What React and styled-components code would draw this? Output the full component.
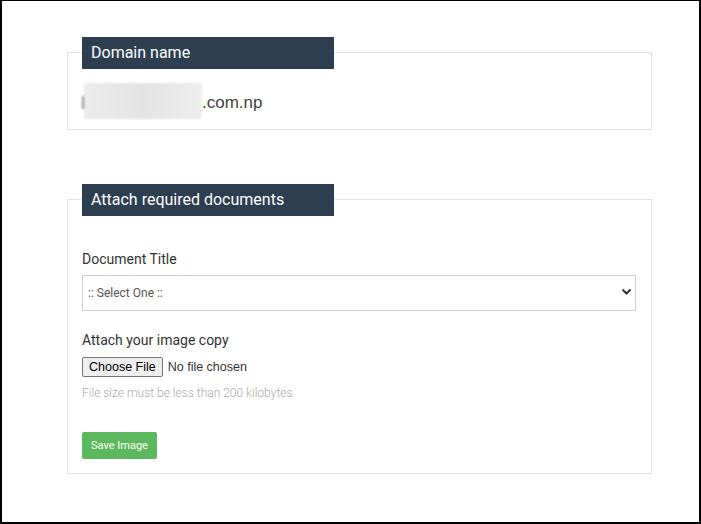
import React from "react";
import styled, { createGlobalStyle } from "styled-components";

const GlobalStyle = createGlobalStyle`
  * {
    box-sizing: border-box;
  }
  body {
    margin: 0;
    background: #fff;
    font-family: Roboto, "Liberation Sans", Arial, sans-serif;
  }
`;

const Frame = styled.div`
  width: 701px;
  height: 524px;
  border-style: solid;
  border-color: #000;
  border-width: 1px 2px 2px 2px;
  padding: 51px 0 0 65px;
  overflow: hidden;
`;

const Card = styled.section`
  width: 585px;
  border: 1px solid #e3e3e3;
  padding: 0 14px ${(p) => p.$bottom || 0}px;
  margin-bottom: ${(p) => p.$gap || 0}px;
`;

const Heading = styled.h3`
  margin: -16px 0 0;
  width: 252px;
  height: 32px;
  background: #2c3e50;
  color: #fff;
  font-size: 16px;
  font-weight: 400;
  line-height: 32px;
  padding-left: 9px;
`;

const DomainRow = styled.div`
  display: flex;
  align-items: center;
  height: 36px;
  margin-top: 14px;
  margin-bottom: 10px;
  font-family: "Liberation Sans", Arial, sans-serif;
  font-size: 17px;
  color: #444;
  span {
    padding-top: 4px;
  }
`;

const Redacted = styled.i`
  position: relative;
  display: inline-block;
  width: 118px;
  height: 36px;
  margin-left: 2px;
  background: linear-gradient(90deg, #ececec, #e4e4e4 50%, #eeeeee);
  filter: blur(0.8px);
  &::before {
    content: "";
    position: absolute;
    left: -2px;
    top: 13px;
    width: 2px;
    height: 13px;
    background: #9a8f8f;
  }
`;

const Label = styled.label`
  display: block;
  font-size: 14px;
  color: #333;
  margin: ${(p) => p.$top || 0}px 0 ${(p) => p.$bottom || 0}px;
  line-height: 17px;
`;

const SelectWrap = styled.div`
  position: relative;
  width: 554px;
  height: 36px;
`;

const Select = styled.select`
  appearance: none;
  width: 100%;
  height: 36px;
  border: 1px solid #cfcfcf;
  border-radius: 0;
  background: #fff;
  padding: 0 5px;
  font-family: Roboto, "Liberation Sans", Arial, sans-serif;
  font-size: 12px;
  color: #555;
  outline: none;
`;

const Chevron = styled.svg`
  position: absolute;
  right: 4px;
  top: 13px;
  pointer-events: none;
`;

const FileInput = styled.input`
  display: block;
  font-family: "Liberation Sans", Arial, sans-serif;
  font-size: 12.5px;
  color: #333;
  height: 20px;
  &::file-selector-button {
    font-family: "Liberation Sans", Arial, sans-serif;
    font-size: 12.5px;
    color: #000;
    background: #efefef;
    border: 1px solid #767676;
    border-radius: 2px;
    padding: 1px 6px;
    height: 20px;
    margin-right: 5px;
  }
`;

const Help = styled.p`
  margin: 8px 0 0;
  font-size: 12px;
  font-weight: 300;
  color: #aaa;
  line-height: 17px;
`;

const SaveButton = styled.button`
  display: block;
  margin-top: 30px;
  width: 75px;
  height: 27px;
  border: none;
  border-radius: 2px;
  background: #5cb85c;
  color: #fff;
  font-family: Roboto, "Liberation Sans", Arial, sans-serif;
  font-size: 11px;
  padding: 0;
`;

export default function App() {
  return (
    <>
      <GlobalStyle />
      <Frame>
        <Card $gap={69}>
          <Heading>Domain name</Heading>
          <DomainRow>
            <Redacted />
            <span>.com.np</span>
          </DomainRow>
        </Card>
        <Card $bottom={14}>
          <Heading>Attach required documents</Heading>
          <Label $top={35} $bottom={7}>Document Title</Label>
          <SelectWrap>
            <Select defaultValue="">
              <option value="">:: Select One ::</option>
            </Select>
            <Chevron width="11" height="8" viewBox="0 0 11 8">
              <path d="M1.5 1.5 L5.5 5.5 L9.5 1.5" fill="none" stroke="#333" strokeWidth="2" />
            </Chevron>
          </SelectWrap>
          <Label $top={21} $bottom={8}>Attach your image copy</Label>
          <FileInput type="file" />
          <Help>File size must be less than 200 kilobytes</Help>
          <SaveButton>Save Image</SaveButton>
        </Card>
      </Frame>
    </>
  );
}
